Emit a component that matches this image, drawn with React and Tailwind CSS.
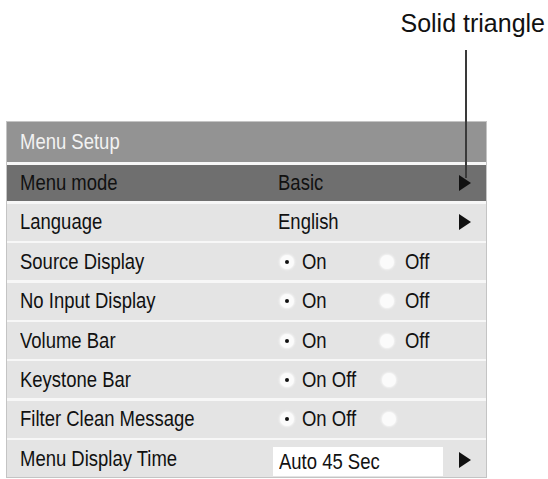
import React from "react";

const Tri = ({ className = "" }) => (
  <svg width="12" height="16" viewBox="0 0 12 16" className={className}>
    <polygon points="0,0 12,8 0,16" fill="#111" />
  </svg>
);

const T = ({ children, className = "" }) => (
  <span className={`inline-block origin-left scale-x-[0.84] whitespace-nowrap ${className}`}>{children}</span>
);

const Radio = ({ on }) => (
  <span className="inline-flex w-[14px] h-[14px] rounded-full bg-[#fbfbfb] items-center justify-center shadow-[0_0_2px_1px_#f4f4f4]">
    {on && <span className="w-[4px] h-[4px] rounded-full bg-[#111]" />}
  </span>
);

const Row = ({ label, children, dark }) => (
  <div className={`flex h-[36.9px] items-center ${dark ? "bg-[#6f6f6f]" : "bg-[#e4e4e4]"}`}>
    <div className="w-[266px] pl-[13px] text-[#111]">
      <T>{label}</T>
    </div>
    <div className="flex-1 flex items-center h-full">{children}</div>
  </div>
);

export default function App() {
  return (
    <div
      className="relative w-[548px] h-[479px] bg-white overflow-hidden text-[22px] leading-none text-[#111]"
      style={{ fontFamily: '"Liberation Sans", Arial, sans-serif' }}
    >
      <div className="h-[122px] flex justify-end items-start pr-[3px] pt-[11px]">
        <span className="text-[25px]">Solid triangle</span>
      </div>
      <div className="ml-[7px] w-[479px] bg-[#f7f7f7] flex flex-col gap-[2.5px] shadow-[0_0_0_1px_#c4c4c4]">
        <div className="h-[40px] bg-[#939393] flex items-center pl-[13px] text-[#f2f2f2]">
          <T>Menu Setup</T>
        </div>
        <Row label="Menu mode" dark>
          <T className="pl-[6px]">Basic</T>
          <Tri className="ml-auto mr-[15px]" />
        </Row>
        <Row label="Language">
          <T className="pl-[6px]">English</T>
          <Tri className="ml-auto mr-[15px]" />
        </Row>
        {["Source Display", "No Input Display", "Volume Bar"].map((l) => (
          <Row key={l} label={l}>
            <span className="ml-[7px] flex"><Radio on /></span>
            <span className="ml-[8px] w-[78px]"><T>On</T></span>
            <span className="flex"><Radio /></span>
            <span className="ml-[11px]"><T>Off</T></span>
          </Row>
        ))}
        {["Keystone Bar", "Filter Clean Message"].map((l) => (
          <Row key={l} label={l}>
            <span className="ml-[7px] flex"><Radio on /></span>
            <span className="ml-[8px] w-[80px]"><T>On Off</T></span>
            <span className="flex"><Radio /></span>
          </Row>
        ))}
        <Row label="Menu Display Time">
          <div className="self-end mb-[1px] w-[170px] h-[29px] bg-white flex items-center pl-[6px]">
            <T>Auto 45 Sec</T>
          </div>
          <Tri className="ml-auto mr-[15px] mt-[2px]" />
        </Row>
      </div>
      <div className="absolute left-[465px] top-[50px] w-[2px] h-[128px] bg-[#3a3a3a]" />
    </div>
  );
}
